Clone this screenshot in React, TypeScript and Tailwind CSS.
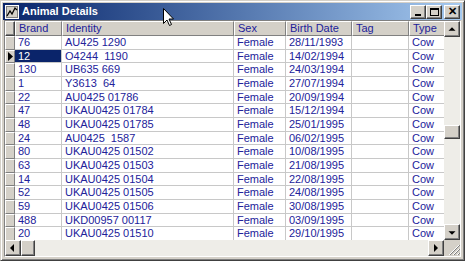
import React from 'react';

type Row = { brand: string; identity: string; sex: string; birth: string; tag: string; type: string };

const rows: Row[] = [
  { brand: '76', identity: 'AU425 1290', sex: 'Female', birth: '28/11/1993', tag: '', type: 'Cow' },
  { brand: '12', identity: 'O4244  1190', sex: 'Female', birth: '14/02/1994', tag: '', type: 'Cow' },
  { brand: '130', identity: 'UB635 669', sex: 'Female', birth: '24/03/1994', tag: '', type: 'Cow' },
  { brand: '1', identity: 'Y3613  64', sex: 'Female', birth: '27/07/1994', tag: '', type: 'Cow' },
  { brand: '22', identity: 'AU0425 01786', sex: 'Female', birth: '20/09/1994', tag: '', type: 'Cow' },
  { brand: '47', identity: 'UKAU0425 01784', sex: 'Female', birth: '15/12/1994', tag: '', type: 'Cow' },
  { brand: '48', identity: 'UKAU0425 01785', sex: 'Female', birth: '25/01/1995', tag: '', type: 'Cow' },
  { brand: '24', identity: 'AU0425  1587', sex: 'Female', birth: '06/02/1995', tag: '', type: 'Cow' },
  { brand: '80', identity: 'UKAU0425 01502', sex: 'Female', birth: '10/08/1995', tag: '', type: 'Cow' },
  { brand: '63', identity: 'UKAU0425 01503', sex: 'Female', birth: '21/08/1995', tag: '', type: 'Cow' },
  { brand: '14', identity: 'UKAU0425 01504', sex: 'Female', birth: '22/08/1995', tag: '', type: 'Cow' },
  { brand: '52', identity: 'UKAU0425 01505', sex: 'Female', birth: '24/08/1995', tag: '', type: 'Cow' },
  { brand: '59', identity: 'UKAU0425 01506', sex: 'Female', birth: '30/08/1995', tag: '', type: 'Cow' },
  { brand: '488', identity: 'UKD00957 00117', sex: 'Female', birth: '03/09/1995', tag: '', type: 'Cow' },
  { brand: '20', identity: 'UKAU0425 01510', sex: 'Female', birth: '29/10/1995', tag: '', type: 'Cow' },
];

const cols = [
  { key: 'brand', label: 'Brand', w: 'w-[47px]' },
  { key: 'identity', label: 'Identity', w: 'w-[172px]' },
  { key: 'sex', label: 'Sex', w: 'w-[52px]' },
  { key: 'birth', label: 'Birth Date', w: 'w-[66px]' },
  { key: 'tag', label: 'Tag', w: 'w-[57px]' },
  { key: 'type', label: 'Type', w: 'w-[60px]' },
] as const;

const raised = 'border border-t-white border-l-white border-r-[#404040] border-b-[#404040] shadow-[inset_-1px_-1px_0_#808080,inset_1px_1px_0_#d4d0c8]';

const Arrow: React.FC<{ dir: 'up' | 'down' | 'left' | 'right' }> = ({ dir }) => {
  const pts = {
    up: '4,6 8,2 12,6',
    down: '4,3 8,7 12,3',
    left: '6,1 2,5 6,9',
    right: '3,1 7,5 3,9',
  }[dir];
  const vb = dir === 'up' || dir === 'down' ? '0 0 16 9' : '0 0 10 10';
  return (
    <svg viewBox={vb} className={dir === 'up' || dir === 'down' ? 'w-[16px] h-[9px]' : 'w-[10px] h-[10px]'}>
      <polygon points={pts} fill="#000" />
    </svg>
  );
};

const ScrollBtn: React.FC<{ dir: 'up' | 'down' | 'left' | 'right' }> = ({ dir }) => (
  <div className={`w-[16px] h-[16px] shrink-0 bg-[#d4d0c8] flex items-center justify-center ${raised}`}>
    <Arrow dir={dir} />
  </div>
);

const TitleButton: React.FC<{ children: React.ReactNode }> = ({ children }) => (
  <div className={`w-[16px] h-[14px] bg-[#d4d0c8] flex items-center justify-center ${raised}`}>{children}</div>
);

export default function App() {
  return (
    <div
      className="relative w-[465px] h-[261px] bg-[#d4d0c8] border border-t-[#d4d0c8] border-l-[#d4d0c8] border-r-[#404040] border-b-[#404040] shadow-[inset_1px_1px_0_#fff,inset_-1px_-1px_0_#808080] p-[2px] pb-[3px] flex flex-col overflow-hidden"
      style={{ fontFamily: '"Liberation Sans", Arial, sans-serif' }}
    >
      {/* title bar */}
      <div className="h-[17px] shrink-0 flex items-center bg-gradient-to-r from-[#0a246a] to-[#a6caf0] pl-[2px] pr-[2px]">
        <svg viewBox="0 0 14 14" className="w-[14px] h-[14px] shrink-0">
          <rect x="0.5" y="0.5" width="13" height="13" fill="#c0c0c0" stroke="#fff" />
          <rect x="1.5" y="1.5" width="11" height="11" fill="#d4d0c8" stroke="#808080" />
          <polyline points="2,11 5,6 7,9 10,3 12,5" fill="none" stroke="#000" strokeWidth="1.3" />
        </svg>
        <span className="ml-[3px] text-white font-bold text-[11px] leading-none">Animal Details</span>
        <div className="ml-auto flex items-center">
          <TitleButton>
            <div className="w-[6px] h-[2px] bg-black mt-[6px] -ml-[1px]" />
          </TitleButton>
          <TitleButton>
            <div className="w-[9px] h-[8px] border border-black border-t-2" />
          </TitleButton>
          <div className="w-[2px]" />
          <TitleButton>
            <span className="text-[11px] font-bold leading-none text-black">✕</span>
          </TitleButton>
        </div>
      </div>

      {/* grid */}
      <div className="flex-1 mx-[1px] border border-t-[#808080] border-l-[#808080] border-r-white border-b-white flex flex-col overflow-hidden">
        <div className="flex flex-1 min-h-0">
          <div className="flex-1 min-w-0 overflow-hidden bg-white text-[11px] text-[#22229a]">
            {/* header */}
            <div className="flex h-[15px]">
              <div className={`w-[10px] shrink-0 bg-[#d4d0c8] ${raised}`} />
              {cols.map(c => (
                <div
                  key={c.key}
                  className={`${c.w} shrink-0 bg-[#d4d0c8] border border-t-white border-l-white border-r-[#808080] border-b-[#808080] px-[3px] leading-[13px] whitespace-nowrap overflow-hidden`}
                >
                  {c.label}
                </div>
              ))}
            </div>
            {rows.map((r, i) => (
              <div key={i} className="flex h-[13.67px]">
                <div className="w-[10px] shrink-0 bg-[#d4d0c8] border border-t-white border-l-white border-r-[#808080] border-b-[#808080] flex items-center justify-center">
                  {i === 1 && (
                    <svg viewBox="0 0 5 9" className="w-[5px] h-[9px]">
                      <polygon points="0,0 5,4.5 0,9" fill="#000" />
                    </svg>
                  )}
                </div>
                {cols.map(c => {
                  const sel = i === 1 && c.key === 'brand';
                  return (
                    <div
                      key={c.key}
                      className={`${c.w} shrink-0 border-r border-b border-[#c8c8c8] px-[3px] leading-[12.5px] whitespace-pre overflow-hidden ${sel ? 'bg-[#0a246a] text-white' : ''}`}
                    >
                      {r[c.key]}
                    </div>
                  );
                })}
              </div>
            ))}
          </div>
          {/* vertical scrollbar */}
          <div className="w-[16px] shrink-0 flex flex-col bg-[#eeede8]">
            <ScrollBtn dir="up" />
            <div className="flex-1 relative">
              <div className={`absolute left-0 top-[88px] w-[16px] h-[14px] bg-[#d4d0c8] ${raised}`} />
            </div>
            <ScrollBtn dir="down" />
          </div>
        </div>
        {/* horizontal scrollbar */}
        <div className="h-[16px] shrink-0 flex bg-[#eeede8]">
          <ScrollBtn dir="left" />
          <div className={`w-[14px] h-[16px] shrink-0 bg-[#d4d0c8] ${raised}`} />
          <div className="flex-1" />
          <ScrollBtn dir="right" />
          <div className="w-[16px] h-[16px] shrink-0 bg-[#d4d0c8] flex items-end justify-end">
            <svg viewBox="0 0 12 12" className="w-[12px] h-[12px]">
              <line x1="11" y1="1" x2="1" y2="11" stroke="#fff" />
              <line x1="12" y1="1" x2="2" y2="11" stroke="#808080" />
              <line x1="11" y1="5" x2="5" y2="11" stroke="#fff" />
              <line x1="12" y1="5" x2="6" y2="11" stroke="#808080" />
              <line x1="11" y1="9" x2="9" y2="11" stroke="#fff" />
              <line x1="12" y1="9" x2="10" y2="11" stroke="#808080" />
            </svg>
          </div>
        </div>
      </div>

      {/* mouse pointer */}
      <svg viewBox="0 0 12 19" className="absolute left-[162px] top-[7px] w-[12px] h-[19px]">
        <path d="M0.5,0.5 L0.5,15.5 L4,12 L6.5,17.5 L8.5,16.5 L6,11 L10.5,11 Z" fill="#fff" stroke="#000" strokeWidth="1" strokeLinejoin="round" />
      </svg>
    </div>
  );
}
